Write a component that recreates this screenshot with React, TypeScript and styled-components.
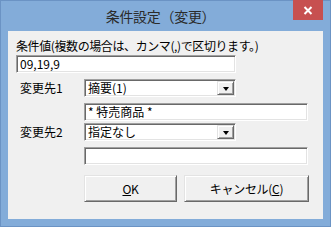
import React from 'react';
import styled, { createGlobalStyle, css } from 'styled-components';

const GlobalStyle = createGlobalStyle`
  html, body {
    margin: 0;
    padding: 0;
    background: #ffffff;
  }
  body {
    font-family: "Noto Sans CJK JP", "Liberation Sans", sans-serif;
  }
`;

const uiFont = `"Noto Sans CJK JP", "Liberation Sans", sans-serif`;

const sunken = css`
  box-sizing: border-box;
  border-style: solid;
  border-width: 1px;
  border-color: #a0a0a0 #ffffff #ffffff #a0a0a0;
  box-shadow: inset 1px 1px 0 #696969, inset -1px -1px 0 #e3e3e3;
  background: #ffffff;
`;

const raised = css`
  box-sizing: border-box;
  border-style: solid;
  border-width: 1px;
  border-color: #e3e3e3 #696969 #696969 #e3e3e3;
  box-shadow: inset 1px 1px 0 #ffffff, inset -1px -1px 0 #a0a0a0;
  background: #f0f0f0;
`;

const Frame = styled.div`
  width: 331px;
  height: 227px;
  box-sizing: border-box;
  background: #83acd9;
  border: 1px solid #6b93c4;
  display: flex;
  flex-direction: column;
`;

const TitleBar = styled.div`
  height: 30px;
  display: flex;
  align-items: flex-start;
  position: relative;
`;

const Title = styled.div`
  flex: 1;
  text-align: center;
  padding-right: 10px;
  padding-top: 5px;
  font-family: ${uiFont};
  font-size: 14px;
  letter-spacing: -0.3px;
  color: #2b2b2b;
`;

const CloseButton = styled.div`
  position: absolute;
  top: -1px;
  right: 7px;
  width: 30px;
  height: 20px;
  background: #c75050;
  display: flex;
  align-items: center;
  justify-content: center;
`;

const Client = styled.div`
  flex: 1;
  margin: 0 7px 7px 7px;
  background: #f0f0f0;
  padding: 6px 0 0 8px;
  font-family: ${uiFont};
  font-size: 12px;
  color: #000;
`;

const Caption = styled.div`
  height: 18px;
  line-height: 18px;
  letter-spacing: -0.4px;
  white-space: nowrap;
`;

const TextBox = styled.div<{ $width: number }>`
  ${sunken};
  width: ${(p) => p.$width}px;
  height: 18px;
  line-height: 16px;
  padding-left: 3px;
  font-size: 12px;
  white-space: nowrap;
`;

const Form = styled.div`
  display: grid;
  grid-template-columns: 68px auto;
  margin-top: 6px;
`;

const Label = styled.div<{ $gap?: number }>`
  padding-left: 4px;
  height: 18px;
  line-height: 18px;
  margin-top: ${(p) => p.$gap ?? 0}px;
`;

const Cell = styled.div<{ $gap?: number }>`
  margin-top: ${(p) => p.$gap ?? 0}px;
`;

const Select = styled.div`
  ${sunken};
  width: 152px;
  height: 18px;
  display: flex;
  align-items: stretch;
`;

const SelectText = styled.div`
  flex: 1;
  line-height: 16px;
  padding-left: 3px;
  white-space: nowrap;
`;

const DropButton = styled.div`
  ${raised};
  width: 17px;
  margin: 1px 1px 1px 0;
  display: flex;
  align-items: center;
  justify-content: center;
`;

const Arrow = styled.div`
  width: 0;
  height: 0;
  border-left: 3.5px solid transparent;
  border-right: 3.5px solid transparent;
  border-top: 4px solid #000;
  margin-top: 1px;
`;

const Buttons = styled.div`
  display: flex;
  gap: 7px;
  margin-top: 10px;
`;

const Button = styled.div<{ $width: number }>`
  ${raised};
  width: ${(p) => p.$width}px;
  height: 27px;
  display: flex;
  align-items: center;
  justify-content: center;
  font-size: 12px;
  letter-spacing: -0.3px;
`;

const Key = styled.span`
  text-decoration: underline;
`;

const Combo: React.FC<{ value: string }> = ({ value }) => (
  <Select>
    <SelectText>{value}</SelectText>
    <DropButton>
      <Arrow />
    </DropButton>
  </Select>
);

export default function App() {
  return (
    <>
      <GlobalStyle />
      <Frame>
        <TitleBar>
          <Title>条件設定（変更）</Title>
          <CloseButton>
            <svg width="10" height="9" viewBox="0 0 10 9">
              <path d="M1.5 1 L8.5 8 M8.5 1 L1.5 8" stroke="#ffffff" strokeWidth="2" />
            </svg>
          </CloseButton>
        </TitleBar>
        <Client>
          <Caption>条件値(複数の場合は、カンマ(,)で区切ります。)</Caption>
          <TextBox $width={220}>09,19,9</TextBox>
          <Form>
            <Label>変更先1</Label>
            <Cell>
              <Combo value="摘要(1)" />
            </Cell>
            <span />
            <Cell $gap={6}>
              <TextBox $width={224}>* 特売商品 *</TextBox>
            </Cell>
            <Label $gap={2}>変更先2</Label>
            <Cell $gap={2}>
              <Combo value="指定なし" />
            </Cell>
            <span />
            <Cell $gap={6}>
              <TextBox $width={224} />
            </Cell>
            <span />
            <Buttons>
              <Button $width={93}>
                <span>
                  <Key>O</Key>K
                </span>
              </Button>
              <Button $width={125}>
                <span>
                  キャンセル(<Key>C</Key>)
                </span>
              </Button>
            </Buttons>
          </Form>
        </Client>
      </Frame>
    </>
  );
}
